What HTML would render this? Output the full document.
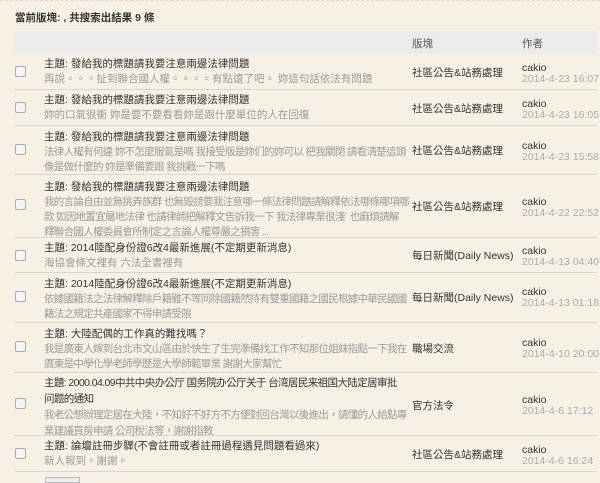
<!DOCTYPE html>
<html><head><meta charset="utf-8"><style>
*{margin:0;padding:0;box-sizing:border-box}
body{width:600px;height:480px;overflow:hidden;background:#f6f1e4;font-family:"Liberation Sans","Noto Sans CJK TC",sans-serif;font-size:10.5px;color:#333;position:relative}
.top{position:absolute;left:0;right:0;top:0;border-top:1px dashed #f0c8d0}
.cap{position:absolute;left:15px;top:10px;font-weight:bold;font-size:10.5px}
.hd{position:absolute;left:15px;width:582px;top:31px;height:23px;background:#ebebea}
.hd span{position:absolute;top:5px;color:#555}
.row{position:absolute;left:15px;width:582px;border-bottom:1px solid #d8d5cc}
.cb{position:absolute;left:0px;width:11px;height:11px;border:1px solid #aaa;border-radius:2px;background:#f4f4f4}
.ct{position:absolute;left:29px;width:366px;line-height:15px;white-space:nowrap;overflow:hidden}
.ct .t{color:#333}
.ct .e{color:#9a9a9a;letter-spacing:-0.7px}
.bd{position:absolute;left:397px;color:#333;white-space:nowrap}
.au{position:absolute;left:507px;line-height:11px;white-space:nowrap;font-size:10.5px}
.au .d{color:#aaa}
</style></head><body>
<div class="top"></div>
<div class="cap">當前版塊: , 共搜索出結果 9 條</div>
<div class="hd"><span style="left:397px">版塊</span><span style="left:507px">作者</span></div>

<div class="row" style="top:54px;height:36px"><div class="cb" style="top:12px"></div><div class="ct" style="top:3px"><div class="t">主題: 發給我的標題請我要注意兩邊法律問題</div><div class="e" style="letter-spacing:0">再說。。。扯到聯合國人權。。。。有點遠了吧。 妳這句話依法有問題</div></div><div class="bd" style="top:11px">社區公告&amp;站務處理</div><div class="au" style="top:9px">cakio<br><span class="d">2014-4-23 16:07</span></div></div>

<div class="row" style="top:90px;height:36px"><div class="cb" style="top:12px"></div><div class="ct" style="top:3px"><div class="t">主題: 發給我的標題請我要注意兩邊法律問題</div><div class="e" style="letter-spacing:0">妳的口氣很衝 妳是要不要看看妳是跟什麼單位的人在回復</div></div><div class="bd" style="top:11px">社區公告&amp;站務處理</div><div class="au" style="top:9px">cakio<br><span class="d">2014-4-23 16:05</span></div></div>

<div class="row" style="top:126px;height:49px"><div class="cb" style="top:18px"></div><div class="ct" style="top:4px"><div class="t">主題: 發給我的標題請我要注意兩邊法律問題</div><div class="e">法律人權有何違 妳不怎麼服氣是嗎 我接受版是妳们的妳可以 把我關閉 請看清楚這頭<br>像是做什麼的 妳是準備要跟 我挑戰一下嗎</div></div><div class="bd" style="top:17px">社區公告&amp;站務處理</div><div class="au" style="top:15px">cakio<br><span class="d">2014-4-23 15:58</span></div></div>

<div class="row" style="top:175px;height:63px"><div class="cb" style="top:24px"></div><div class="ct" style="top:5px"><div class="t">主題: 發給我的標題請我要注意兩邊法律問題</div><div class="e">我的言論自由並無挑弄族群 也無毀謗要我注意哪一條法律問題請解釋依法哪條哪項哪<br>款 如因地置宜屬地法律 也請律師把解釋文告訴我一下 我法律專業很淺` 也麻煩請解<br>釋聯合國人權委員會所制定之言論人權尊嚴之損害 ...</div></div><div class="bd" style="top:24px">社區公告&amp;站務處理</div><div class="au" style="top:22px">cakio<br><span class="d">2014-4-22 22:52</span></div></div>

<div class="row" style="top:238px;height:35px"><div class="cb" style="top:12px"></div><div class="ct" style="top:3px"><div class="t">主題: 2014陸配身份證6改4最新進展(不定期更新消息)</div><div class="e" style="letter-spacing:0">海協會條文裡有 六法全書裡有</div></div><div class="bd" style="top:10px">每日新聞(Daily News)</div><div class="au" style="top:8px">cakio<br><span class="d">2014-4-13 04:40</span></div></div>

<div class="row" style="top:273px;height:50px"><div class="cb" style="top:18px"></div><div class="ct" style="top:4px"><div class="t">主題: 2014陸配身份證6改4最新進展(不定期更新消息)</div><div class="e">依據國籍法之法律解釋除戶籍雖不等同除國籍然持有雙重國籍之國民根據中華民國國<br>籍法之規定共產國家不得申請受限</div></div><div class="bd" style="top:17px">每日新聞(Daily News)</div><div class="au" style="top:14px">cakio<br><span class="d">2014-4-13 01:18</span></div></div>

<div class="row" style="top:323px;height:50px"><div class="cb" style="top:18px"></div><div class="ct" style="top:4px"><div class="t">主題: 大陸配偶的工作真的難找嗎？</div><div class="e">我是廣東人嫁到台北市文山區由於快生了生完準備找工作不知那位姐妹指點一下我在<br>廣東是中學化學老師學歷是大學師範畢業 謝謝大家幫忙</div></div><div class="bd" style="top:18px">職場交流</div><div class="au" style="top:15px">cakio<br><span class="d">2014-4-10 20:00</span></div></div>

<div class="row" style="top:373px;height:63px"><div class="cb" style="top:25px"></div><div class="ct" style="top:2px;line-height:16px"><div class="t" style="letter-spacing:-0.6px">主題: 2000.04.09中共中央办公厅 国务院办公厅关于 台湾居民来祖国大陆定居审批<br>问题的通知</div><div class="e">我老公想辦理定居在大陸，不知好不好方不方便對回台灣以後進出，請懂的人給點專<br>業建議買房申請 公司稅法等，謝謝指教</div></div><div class="bd" style="top:25px">官方法令</div><div class="au" style="top:22px">cakio<br><span class="d">2014-4-6 17:12</span></div></div>

<div class="row" style="top:436px;height:36px"><div class="cb" style="top:12px"></div><div class="ct" style="top:3px"><div class="t">主題: 論壇註冊步驟(不會註冊或者註冊過程遇見問題看過來)</div><div class="e" style="letter-spacing:0">新人報到。謝謝。</div></div><div class="bd" style="top:11px">社區公告&amp;站務處理</div><div class="au" style="top:9px">cakio<br><span class="d">2014-4-6 16:24</span></div></div>
<div style="position:absolute;left:45px;top:477px;width:35px;height:6px;border:1px solid #bbb;background:#eee"></div>
</body></html>
